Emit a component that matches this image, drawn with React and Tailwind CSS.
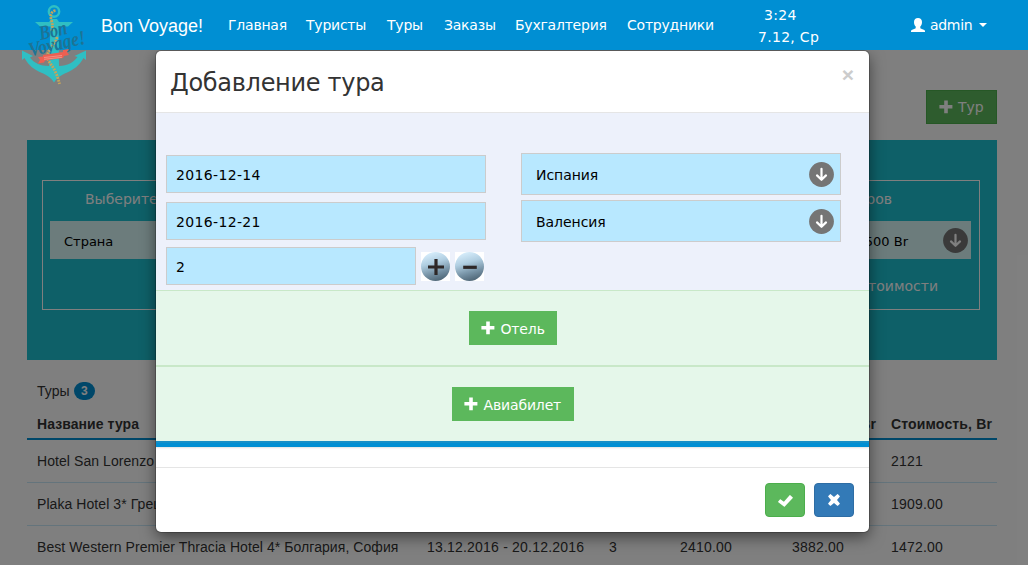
const navItems = [
  { label: "Главная", width: "w-[78px]" },
  { label: "Туристы", width: "w-[81px]" },
  { label: "Туры", width: "w-[57px]" },
  { label: "Заказы", width: "w-[71px]" },
  { label: "Бухгалтерия", width: "w-[112px]" },
  { label: "Сотрудники", width: "w-[131px]" },
];

const tours = [
  ["Hotel San Lorenzo 3* Италия, Рим", "14.12.2016 - 21.12.2016", "2", "1800.00", "3921.00", "2121"],
  ["Plaka Hotel 3* Греция, Афины", "10.12.2016 - 17.12.2016", "2", "1750.00", "3659.00", "1909.00"],
  ["Best Western Premier Thracia Hotel 4* Болгария, София", "13.12.2016 - 20.12.2016", "3", "2410.00", "3882.00", "1472.00"],
];

const columns = "grid grid-cols-[390px_182px_71px_112px_99px_116px] pl-[10px]";

function PlusIcon() {
  return (
    <svg className="size-[14px] shrink-0" viewBox="0 0 14 14" fill="currentColor">
      <path d="M5.2.4h3.600v4.600h4.600v3.600H8.800v4.600H5.200V8.600H.4V5h4.800z" />
    </svg>
  );
}

function ArrowCircle() {
  return (
    <svg className="size-[25px] shrink-0" viewBox="0 0 25 25">
      <circle cx="12.500" cy="12.500" r="12.400" fill="#757575" />
      <path d="M12.500 6.800v11M8 13.400l4.500 4.400 4.500-4.400" fill="none" stroke="#fff" strokeWidth="2.200" strokeLinecap="round" strokeLinejoin="round" />
    </svg>
  );
}

function RoundButton({ minus }) {
  const id = minus ? "ballMinus" : "ballPlus";
  return (
    <button className="size-[29px] bg-white">
      <svg className="block size-[29px]" viewBox="0 0 29 29">
        <defs>
          <linearGradient id={id} x1="0.350" y1="0" x2="0.650" y2="1">
            <stop offset="0" stopColor="#d8eefc" />
            <stop offset="0.350" stopColor="#b1cfe2" />
            <stop offset="0.700" stopColor="#7692a5" />
            <stop offset="1" stopColor="#4c6373" />
          </linearGradient>
        </defs>
        <circle cx="14.500" cy="14.500" r="14.500" fill={`url(#${id})`} />
        <path d={minus ? "M8.200 15.300h13.600" : "M7 15h16M15 7v16"} stroke="#2d2727" strokeWidth="3.200" />
      </svg>
    </button>
  );
}

function Logo() {
  return (
    <svg className="absolute left-[20px] top-[4px] h-[84px] w-[68px] overflow-visible" viewBox="20 4 68 84">
      <circle cx="54" cy="11.500" r="5.200" fill="none" stroke="#2fbfc3" strokeWidth="2.400" />
      <path d="M35 22h14l2-3h6l2 3h14l-5 4.500h-9.500L59 66c9-.5 14-3.500 18.500-9l-3-1L86 50.500V60l-2.500-2C79 66 74 69.500 66 73c-5 2.200-9 4.500-12 9.500-3-5-7-7.300-12-9.500-8-3.500-13-7-17.500-15L22 60v-9.500L33 56l-3 1.500c4 5.500 10 8.500 19 8.500l1.500-39.500H40z" fill="#2fbfc3" />
      <path d="M55.500 10.500c-5 1-5.500 6-4 10 1 4 1.500 7 0 11M57 37c-1 7-8 11-9.500 18-.8 5 3 8 6.500 14 2 4 4 8 5.500 15" fill="none" stroke="#c4a55b" strokeWidth="2.800" strokeDasharray="2 1" />
      <g transform="rotate(-13 55 44)" fill="#1d7495" fontFamily="'Liberation Serif', serif" fontStyle="italic" fontWeight="bold">
        <text x="42" y="37" fontSize="20" textLength="28" lengthAdjust="spacingAndGlyphs">Bon</text>
        <text x="28" y="50.500" fontSize="20" textLength="58" lengthAdjust="spacingAndGlyphs">Voyage!</text>
      </g>
      <path d="M38 57l5-.5V55l20-3v-2l6-1-2 3 2 3-5 1-1 2-18 2.500-1 2-6 1 2-3.500z" fill="#ee5f51" />
      <path d="M44 57.500l18-2M44 59.300l18-2" stroke="#f7b0a5" strokeWidth=".6" />
    </svg>
  );
}

function Navbar() {
  return (
    <nav className="relative z-30 flex h-[50px] items-center bg-[#008fd3] pl-[101px] text-[14px] text-white">
      <Logo />
      <a className="w-[127px] pt-[2px] font-['Liberation_Sans',sans-serif] text-[18px] leading-[20px] whitespace-nowrap">Bon Voyage!</a>
      {navItems.map((item) => (
        <a key={item.label} className={`${item.width} shrink-0 tracking-[-0.23px] whitespace-nowrap`}>{item.label}</a>
      ))}
      <div className="w-[153px] pt-[2px] leading-[22px] tracking-[0.3px] whitespace-nowrap">
        <div className="pl-[6px]">3:24</div>
        <div>7.12, Ср</div>
      </div>
      <div className="flex items-center whitespace-nowrap">
        <svg className="size-[14px]" viewBox="0 0 14 14" fill="currentColor">
          <path d="M7 0c2.400 0 4 1.500 4 4 0 2-.7 3.600-1.700 4.500v1.200c0 .6.4.9 1 1.100l2.500.9c.8.300 1.200.8 1.200 1.500v.8H0v-.8c0-.7.4-1.200 1.200-1.500l2.500-.9c.6-.2 1-.5 1-1.100V8.500C3.700 7.600 3 6 3 4c0-2.500 1.600-4 4-4z" />
        </svg>
        <span className="w-[49px] pl-[5px] tracking-[-0.3px]">admin</span>
        <svg className="ml-[5px] h-[4px] w-[8px]" viewBox="0 0 8 4" fill="currentColor"><path d="M0 0h8L4 4z" /></svg>
      </div>
    </nav>
  );
}

function Filters() {
  return (
    <section className="mt-4 h-[220px] bg-[#1cc0d0] pt-10 pr-[17px] pl-[15px]">
      <div className="flex h-[130px] justify-between border border-white pr-2 pl-[7px] text-white">
        <div className="w-[280px] pt-[8px]">
          <div className="pl-[35px] text-[14px] leading-5">Выберите страну</div>
          <div className="mt-[12px] flex h-[38px] items-center bg-[#d8f8f8] pt-[3px] pl-[14px] text-[13px] text-black">Страна</div>
        </div>
        <div className="w-[280px] pt-[8px] text-right">
          <div className="pr-[79px] text-[14px] leading-5">Цена туров</div>
          <div className="mt-[12px] flex h-[38px] items-center justify-end gap-[35px] bg-[#d8f8f8] pr-[3px] text-[13px] text-black">
            <span className="pt-[3px]">до 1500 Br</span>
            <ArrowCircle />
          </div>
          <div className="mt-[17px] pr-[33px] text-[14px] leading-5">По стоимости</div>
        </div>
      </div>
    </section>
  );
}

function TourTable() {
  return (
    <section className="font-['Liberation_Sans',sans-serif] text-[14px] tracking-[0.07px] text-[#333]">
      <div className="mt-[21px] flex h-5 items-center gap-[4px] pl-[10px]">
        <span>Туры</span>
        <span className="flex h-[18px] w-[21px] items-center justify-center rounded-full bg-[#008fd3] text-[12px] font-bold text-white">3</span>
      </div>
      <div className={`${columns} mt-[8px] h-[31px] items-center border-b-2 border-[#008fd3] pt-[2px] font-bold whitespace-nowrap`}>
        <span>Название тура</span>
        <span>Даты</span>
        <span>Дни</span>
        <span>Закупка, Br</span>
        <span className="pr-[15px] text-right">Цена, Br</span>
        <span className="tracking-[0.15px]">Стоимость, Br</span>
      </div>
      {tours.map((row) => (
        <div key={row[0]} className={`${columns} h-[43px] items-center border-b border-[#c8e8f8] whitespace-nowrap`}>
          {row.map((cell, i) => <span key={i} className={i === 0 ? "" : "tracking-[0.2px]"}>{cell}</span>)}
        </div>
      ))}
    </section>
  );
}

function TextField({ value, className }) {
  return (
    <div className={`${className} flex h-[38px] items-center border border-[#ccc] bg-[#b8e8ff] pt-[3px] pl-[9px] text-[14px] tracking-[0.35px] text-black`}>
      {value}
    </div>
  );
}

function SelectField({ value }) {
  return (
    <div className="flex h-[42px] w-[320px] items-center justify-between border border-[#ccc] bg-[#b8e8ff] pr-[6px] pl-[14px] text-[14px] tracking-[-0.05px] text-black">
      <span className="pt-[2px]">{value}</span>
      <ArrowCircle />
    </div>
  );
}

function AddButton({ label, className }) {
  return (
    <button className={`${className} flex h-[34px] items-center gap-[6px] border border-[#5cb85c] bg-[#5cb85c] pl-[11px] text-[14px] tracking-[-0.15px] whitespace-nowrap text-white`}>
      <PlusIcon />
      <span className="pt-[2px]">{label}</span>
    </button>
  );
}

function TourDialog() {
  return (
    <div className="absolute top-[51px] left-[156px] z-20 flex h-[481px] w-[713px] flex-col overflow-hidden rounded-[5px] bg-white shadow-[0_0_0_1px_rgba(0,0,0,0.2),0_5px_15px_rgba(0,0,0,0.5)]">
      <header className="flex h-[62px] justify-between border-b border-[#e5e5e5] pt-[15px] pr-[15px] pl-[14px]">
        <h4 className="text-[24px] leading-[34px] tracking-[-0.3px] whitespace-nowrap text-[#333]">Добавление тура</h4>
        <button className="-mt-[2px] flex h-[21px] items-center font-['Liberation_Sans',sans-serif] text-[21px] font-bold text-[#ccc]">×</button>
      </header>
      <div className="flex h-[177px] gap-[35px] bg-[#edf1fb] pl-[10px]">
        <div className="w-[320px] pt-[42px]">
          <TextField value="2016-12-14" className="w-[320px]" />
          <TextField value="2016-12-21" className="mt-[9px] w-[320px]" />
          <div className="mt-[7px] flex items-center gap-[5px]">
            <TextField value="2" className="w-[250px]" />
            <RoundButton />
            <RoundButton minus />
          </div>
        </div>
        <div className="flex flex-col gap-[5px] pt-[40px]">
          <SelectField value="Испания" />
          <SelectField value="Валенсия" />
        </div>
      </div>
      <div className="flex h-[76px] justify-center border-t border-b border-[#c8e8c8] bg-[#e5f7ea] pt-[20px]">
        <AddButton label="Отель" className="w-[88px]" />
      </div>
      <div className="flex h-[75px] justify-center border-t border-[#c8e8c8] bg-[#e5f7ea] pt-[20px]">
        <AddButton label="Авиабилет" className="w-[122px]" />
      </div>
      <div className="h-[6px] shrink-0 border-t-2 border-[#158fc8] bg-[#008fd3] shadow-[0_1px_2px_rgba(0,0,0,0.12)]" />
      <footer className="mt-[20px] flex grow justify-end gap-[9px] border-t border-[#e5e5e5] pt-[15px] pr-[15px]">
        <button className="flex h-[34px] w-[40px] items-center justify-center rounded-[4px] border border-[#4cae4c] bg-[#5cb85c]">
          <svg className="mt-[2px] h-[12px] w-[15px]" viewBox="0 0 15 12" fill="#fff"><path d="M12.300.2l2.500 2.200c.2.200.2.500 0 .7L6.800 11.500c-.3.300-.6.300-.9 0L.3 7.200c-.3-.2-.3-.5-.1-.7l1.700-1.900c.2-.3.500-.3.800-.1l3.200 2.200L11.600.3c.2-.3.500-.3.700-.1z" /></svg>
        </button>
        <button className="flex h-[34px] w-[40px] items-center justify-center rounded-[4px] border border-[#2e6da4] bg-[#337ab7]">
          <svg className="size-[12px]" viewBox="0 0 12 12" fill="#fff"><path d="M2.700.2L6 3.100 9.300.2c.2-.2.400-.2.600 0l1.800 1.900c.2.200.2.400 0 .6L9 6l2.700 3.300c.2.200.2.400 0 .6l-1.800 1.900c-.2.200-.4.200-.6 0L6 8.900l-3.300 2.900c-.2.200-.4.200-.6 0L.3 9.900c-.2-.2-.2-.4 0-.6L3 6 .3 2.700c-.2-.2-.2-.4 0-.6L2.100.2c.2-.2.400-.2.600 0z" /></svg>
        </button>
      </footer>
    </div>
  );
}

export default function App() {
  return (
    <div className="relative h-[565px] w-[1028px] overflow-hidden bg-white font-['DejaVu_Sans',sans-serif]">
      <Navbar />
      <main className="pt-10 pr-[31px] pl-[27px]">
        <div className="flex justify-end">
          <button className="flex h-[34px] w-[71px] items-center gap-[5px] border border-[#4cae4c] bg-[#5cb85c] pl-[12px] text-[14px] text-white"><PlusIcon /><span className="pt-[1px]">Тур</span></button>
        </div>
        <Filters />
        <TourTable />
      </main>
      <div className="absolute inset-0 z-10 bg-black/50" />
      <TourDialog />
    </div>
  );
}
